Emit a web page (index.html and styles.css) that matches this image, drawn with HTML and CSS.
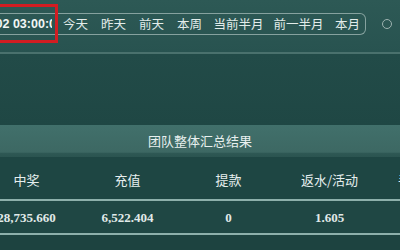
FILE: index.html
```html
<!DOCTYPE html>
<html>
<head>
<meta charset="utf-8">
<link rel="stylesheet" href="styles.css">
</head>
<body>
<div class="page">
  <div class="filter">
    <div class="range">
      <div class="date"><span>2024-01-02 03:00:0</span></div>
      <div class="tabs">
        <span class="tab">今天</span>
        <span class="tab">昨天</span>
        <span class="tab">前天</span>
        <span class="tab">本周</span>
        <span class="tab wide">当前半月</span>
        <span class="tab wide">前一半月</span>
        <span class="tab">本月</span>
      </div>
    </div>
    <span class="radio"></span>
    <div class="mark"></div>
  </div>
  <div class="gap"></div>
  <div class="band">团队整体汇总结果</div>
  <div class="row head">
    <div class="cell">中奖</div>
    <div class="cell">充值</div>
    <div class="cell">提款</div>
    <div class="cell">返水/活动</div>
    <div class="cell last">手续费</div>
  </div>
  <div class="row data">
    <div class="cell">28,735.660</div>
    <div class="cell">6,522.404</div>
    <div class="cell">0</div>
    <div class="cell">1.605</div>
    <div class="cell last"></div>
  </div>
  <div class="rest"></div>
</div>
</body>
</html>
```

FILE: styles.css
```css
html, body {
  margin: 0;
  padding: 0;
}
body {
  width: 400px;
  height: 250px;
  overflow: hidden;
  background: #1f4744;
  font-family: "Noto Sans CJK SC", "Noto Sans", sans-serif;
  color: #e4eeec;
}
.page {
  width: 400px;
  height: 250px;
  overflow: hidden;
}
.filter {
  position: relative;
  display: flex;
  align-items: center;
  background: linear-gradient(180deg, #2d5955 0%, #285350 100%);
  border-bottom: 2px solid #4a716d;
  box-sizing: border-box;
  height: 54px;
  padding-bottom: 5px;
}
.range {
  display: flex;
  align-items: center;
  height: 22px;
  width: 366px;
  box-sizing: border-box;
  border: 1px solid #86a29f;
  border-left: none;
  border-radius: 0 6px 6px 0;
}
.date {
  width: 52px;
  display: flex;
  justify-content: flex-end;
  overflow: hidden;
  white-space: nowrap;
  font-family: "Liberation Sans", sans-serif;
  font-size: 12.5px;
  font-weight: bold;
  color: #f2f6f5;
}
.date span {
  margin-right: -4px;
}
.tabs {
  display: flex;
  align-items: center;
  gap: 10px;
  margin-left: 9.5px;
}
.tab {
  font-size: 12.5px;
  line-height: 16px;
  padding: 0 1.5px;
  color: #e2ecea;
  white-space: nowrap;
}
.tab.wide {
  padding: 0;
}
.radio {
  width: 8px;
  height: 8px;
  border: 1.5px solid #9db2af;
  border-radius: 50%;
  margin-left: 16px;
}
.mark {
  position: absolute;
  left: -12px;
  top: 4px;
  width: 64px;
  height: 33px;
  border: 3px solid #d21d22;
}
.gap {
  height: 71px;
  background: linear-gradient(180deg, #224b48 0%, #1f4744 100%);
}
.band {
  height: 32px;
  box-sizing: border-box;
  display: flex;
  align-items: center;
  justify-content: center;
  font-size: 13px;
  color: #e8f0ef;
  background: linear-gradient(180deg, #41706b 0%, #3d6863 85%, #2e5854 88%, #2b5450 100%);
  padding-bottom: 2px;
}
.row {
  display: flex;
  margin-left: -24px;
  width: 440px;
}
.cell {
  flex: 0 0 101px;
  text-align: center;
  white-space: nowrap;
}
.cell.last {
  flex: 0 0 60px;
  text-align: left;
  padding-left: 18px;
}
.head {
  height: 44px;
  align-items: center;
  box-sizing: border-box;
  border-bottom: 2px solid #8db0ab;
  font-size: 13px;
  color: #e6efee;
  padding-top: 2px;
  background: #1e4643;
}
.data {
  height: 34px;
  align-items: center;
  box-sizing: border-box;
  border-bottom: 2px solid #8db0ab;
  font-family: "Liberation Serif", serif;
  font-weight: bold;
  font-size: 13px;
  color: #e1eae9;
  padding-top: 2px;
  background: #1f4744;
}
.rest {
  height: 20px;
  background: #1d4340;
}
```
